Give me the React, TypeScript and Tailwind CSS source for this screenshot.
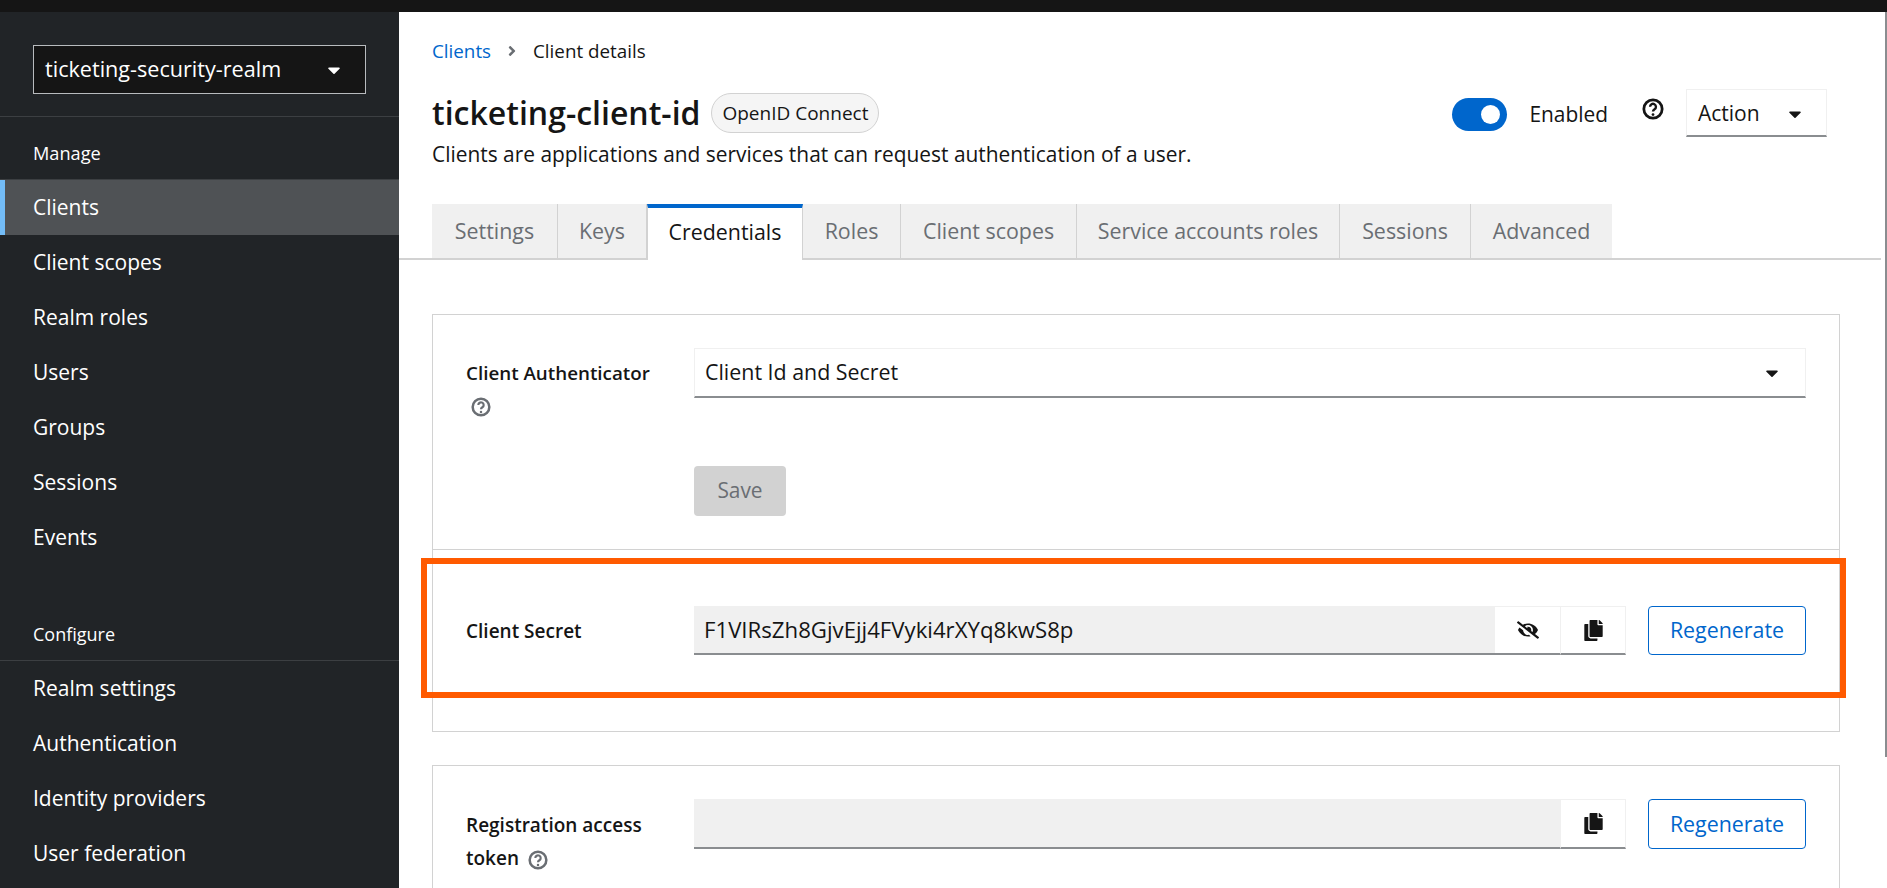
import { FaAngleRight, FaCaretDown, FaCopy, FaEyeSlash } from 'react-icons/fa';

const manageItems = ['Clients', 'Client scopes', 'Realm roles', 'Users', 'Groups', 'Sessions', 'Events'];
const configureItems = ['Realm settings', 'Authentication', 'Identity providers', 'User federation'];

const tabs = [
  { label: 'Settings', width: 'w-[126px]' },
  { label: 'Keys', width: 'w-[89px]' },
  { label: 'Credentials', width: 'w-[156px]', active: true },
  { label: 'Roles', width: 'w-[98px]' },
  { label: 'Client scopes', width: 'w-[176px]' },
  { label: 'Service accounts roles', width: 'w-[263px]' },
  { label: 'Sessions', width: 'w-[131px]' },
  { label: 'Advanced', width: 'w-[141px]' },
];

function HelpIcon({ className }: { className: string }) {
  return (
    <svg viewBox="0 0 24 24" fill="none" stroke="currentColor" className={className}>
      <circle cx="12" cy="12" r="10" strokeWidth="3" />
      <path d="M8.8 9.6a3.2 3.2 0 1 1 4.9 2.7c-1.1.7-1.7 1.2-1.7 2.5" strokeWidth="2.6" />
      <circle cx="12" cy="18" r="1.5" fill="currentColor" stroke="none" />
    </svg>
  );
}

function NavItem({ label, active }: { label: string; active?: boolean }) {
  return (
    <div
      className={`flex h-[55px] items-center text-[21px] text-white ${
        active ? 'border-l-[5px] border-[#73bcf7] bg-[#4f5255] pl-[28px]' : 'pl-[33px]'
      }`}
    >
      {label}
    </div>
  );
}

function CopyButton() {
  return (
    <button className="flex h-full w-[66px] items-center justify-center border-x border-t border-[#f0f0f0] border-b-2 border-b-[#8a8d90] text-[21px] text-[#151515]">
      <FaCopy />
    </button>
  );
}

function RegenerateButton() {
  return (
    <button className="ml-[22px] h-full w-[158px] rounded-[4px] border border-[#06c] text-[21.4px] text-[#06c]">
      Regenerate
    </button>
  );
}

export default function App() {
  return (
    <div className="relative flex h-[888px] flex-col overflow-hidden bg-white font-['Open_Sans',sans-serif] text-[#151515]">
      <div className="h-3 shrink-0 bg-[#151515]" />

      <div className="flex min-h-0 flex-1">
        {/* Sidebar */}
        <aside className="w-[399px] shrink-0 bg-[#212427] text-white">
          <div className="border-b border-[#3c3f42] px-[33px] pb-[22px] pt-[33px]">
            <div className="flex h-[49px] items-center justify-between border border-[#b8bbbe] bg-[#151515] pl-[11px] pr-[21px] text-[21.6px]">
              <span>ticketing-security-realm</span>
              <FaCaretDown className="text-[20px]" />
            </div>
          </div>
          <div className="flex h-[63px] items-center border-b border-[#3c3f42] pl-[33px] pt-[11px] text-[18.2px]">Manage</div>
          {manageItems.map((item) => (
            <NavItem key={item} label={item} active={item === 'Clients'} />
          ))}
          <div className="flex h-[96px] items-end border-b border-[#3c3f42] pb-[12px] pl-[33px] text-[18px]">Configure</div>
          {configureItems.map((item) => (
            <NavItem key={item} label={item} />
          ))}
        </aside>

        {/* Main */}
        <main className="min-w-0 flex-1">
          <div className="flex h-[192px] justify-between pl-[33px] pr-[60px]">
            <div>
              <div className="mt-[26px] flex h-[26px] items-center text-[18.8px]">
                <span className="text-[#06c]">Clients</span>
                <FaAngleRight className="mx-[13px] text-[16px] text-[#6a6e73]" />
                <span>Client details</span>
              </div>
              <div className="mt-[29px] flex h-[40px] items-center">
                <h1 className="text-[32px] font-semibold">ticketing-client-id</h1>
                <span className="ml-[11px] flex h-[40px] w-[168px] items-center justify-center rounded-full border border-[#d2d2d2] bg-[#f5f5f5] text-[19px]">
                  OpenID Connect
                </span>
              </div>
              <p className="mt-[6px] text-[20.9px]">Clients are applications and services that can request authentication of a user.</p>
            </div>
            <div className="mt-[77px] flex h-[48px] items-start">
              <div className="mt-[9px] flex h-[33px] w-[55px] items-center justify-end rounded-full bg-[#06c] pr-[7px]">
                <div className="h-[19px] w-[19px] rounded-full bg-white" />
              </div>
              <span className="ml-[22px] mt-[10px] text-[20.9px]">Enabled</span>
              <HelpIcon className="ml-[34px] mt-[9px] h-[22px] w-[22px]" />
              <div className="ml-[22px] flex h-[48px] w-[141px] items-center justify-between border border-[#f0f0f0] border-b-2 border-b-[#8a8d90] pl-[11px] pr-[21px] pt-[2px] text-[21px]">
                Action
                <FaCaretDown className="text-[20px]" />
              </div>
            </div>
          </div>

          {/* Tabs */}
          <div className="mr-[6px] flex h-[56px] border-b-2 border-[#d2d2d2] pl-[33px]">
            {tabs.map((tab) =>
              tab.active ? (
                <div
                  key={tab.label}
                  className={`${tab.width} -mb-[2px] flex h-[56px] items-center justify-center border-x border-t-4 border-x-[#d2d2d2] border-t-[#06c] bg-white pb-[4px] text-[21.4px]`}
                >
                  {tab.label}
                </div>
              ) : (
                <div
                  key={tab.label}
                  className={`${tab.width} flex items-center justify-center border-r border-[#d2d2d2] bg-[#f0f0f0] text-[21.4px] text-[#6a6e73] last:border-r-0`}
                >
                  {tab.label}
                </div>
              ),
            )}
          </div>

          {/* Credentials */}
          <div className="ml-[33px] mr-[47px] mt-[54px] border border-[#d2d2d2]">
            <div className="h-[235px] border-b border-[#d2d2d2] pl-[33px] pr-[33px] pt-[33px]">
              <div className="flex">
                <div className="w-[228px] pt-[9px] text-[18.8px] font-semibold leading-[32px]">
                  Client Authenticator
                  <HelpIcon className="ml-[5px] mt-[8px] h-[20px] w-[20px] text-[#6a6e73]" />
                </div>
                <div className="flex-1">
                  <div className="flex h-[50px] items-center justify-between border border-[#f0f0f0] border-b-2 border-b-[#8a8d90] pl-[10px] pr-[23px] text-[21.4px]">
                    Client Id and Secret
                    <FaCaretDown className="text-[20px]" />
                  </div>
                  <button className="mt-[68px] h-[50px] w-[92px] rounded-[4px] bg-[#d2d2d2] pb-[1px] text-[20.9px] text-[#6a6e73]">Save</button>
                </div>
              </div>
            </div>
            <div className="h-[181px] pl-[33px] pr-[33px] pt-[56px]">
              <div className="flex h-[49px]">
                <div className="flex w-[228px] items-center pt-[1px] text-[19px] font-semibold">Client Secret</div>
                <div className="flex flex-1 items-center border-b-2 border-[#8a8d90] bg-[#f0f0f0] pl-[10px] text-[22.2px]">
                  F1VIRsZh8GjvEjj4FVyki4rXYq8kwS8p
                </div>
                <button className="flex h-full w-[65px] items-center justify-center border-t border-b-2 border-[#f0f0f0] border-b-[#8a8d90] text-[22px]">
                  <FaEyeSlash />
                </button>
                <CopyButton />
                <RegenerateButton />
              </div>
            </div>
          </div>

          <div className="ml-[33px] mr-[47px] mt-[33px] h-[200px] border border-[#d2d2d2] pl-[33px] pr-[33px] pt-[33px]">
            <div className="flex h-[50px]">
              <div className="w-[228px] pt-[10px] text-[19px] font-semibold leading-[33px]">
                Registration access
                <br />
                token
                <HelpIcon className="ml-[9px] inline h-[20px] w-[20px] text-[#6a6e73]" />
              </div>
              <div className="flex-1 border-b-2 border-[#8a8d90] bg-[#f0f0f0]" />
              <CopyButton />
              <RegenerateButton />
            </div>
          </div>
        </main>
      </div>

      {/* Highlight drawn on top of the screenshot */}
      <div className="absolute left-[421px] top-[558px] h-[140px] w-[1425px] border-[6px] border-[#ff5a00]" />
      <div className="absolute right-0 top-3 h-[745px] w-[2px] bg-[#8a8d90]" />
    </div>
  );
}
